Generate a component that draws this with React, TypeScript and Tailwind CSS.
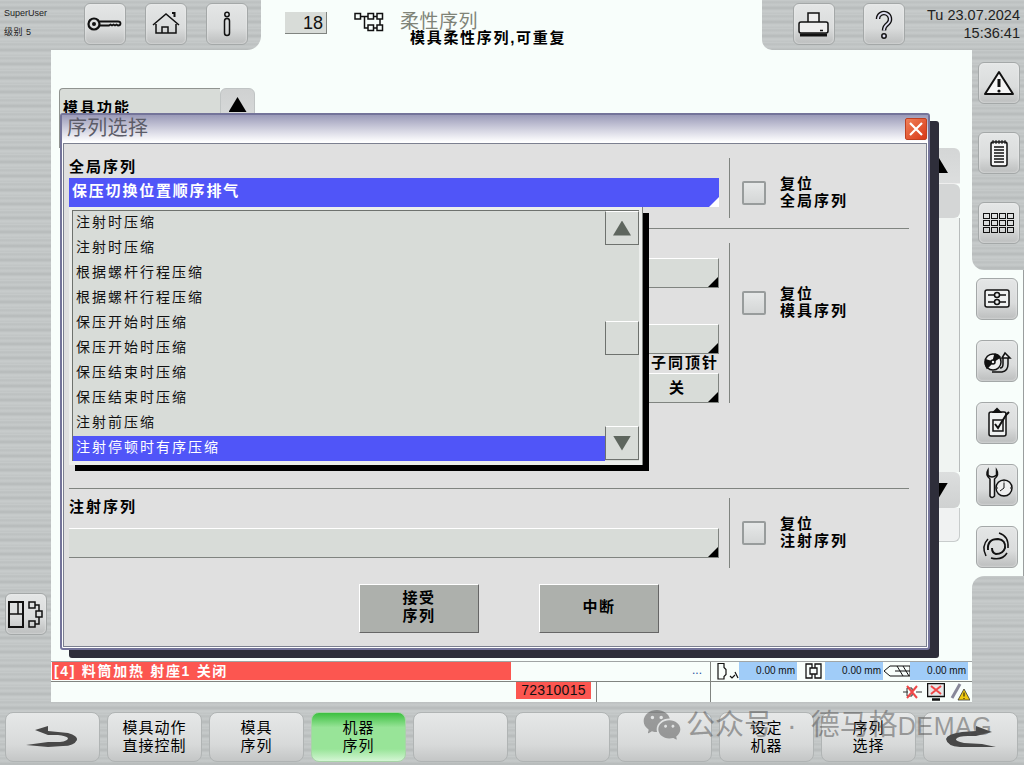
import React from 'react';
import { RiWechatFill } from 'react-icons/ri';

const metal =
  'bg-[repeating-linear-gradient(180deg,#c8cccc_0px,#bcc0c0_2px,#c6caca_5px,#b6baba_8px,#c8cccc_11px,#c0c4c4_14px)]';

const Tool = ({ children }: { children: React.ReactNode }) => (
  <button className="w-[42px] h-[42px] shrink-0 rounded-[6px] border border-[#a4a8a8] bg-[linear-gradient(#e4e6e6,#dadcdc_60%,#bcbebe)] shadow-[inset_0_0_2px_#f4f4f4] p-0">
    <svg className="block -m-px" viewBox="0 0 42 42" width="42" height="42" fill="none" stroke="#111" strokeWidth="1.5">
      {children}
    </svg>
  </button>
);

const Corner = () => (
  <span className="absolute right-0 bottom-0 w-[10px] h-[10px] bg-black [clip-path:polygon(100%_0,100%_100%,0_100%)]" />
);

const Field = ({ text }: { text?: string }) => (
  <div className="relative h-[30px] bg-[#d8dcd8] border-t border-t-white border-b border-b-[#808480] border-r border-r-[#808480] flex items-center justify-center text-[15px] font-bold tracking-[2px]">
    {text}
    <Corner />
  </div>
);

const Reset = ({ lines, top }: { lines: string[]; top: string }) => (
  <div className={`flex items-center gap-[14px] ml-[12px] ${top}`}>
    <div className="w-[24px] h-[24px] rounded-[2px] border-2 border-[#989c9c] bg-[linear-gradient(#e6e8e8,#d4d6d6)]" />
    <div className="-mt-[2px] text-[15px] leading-[17px] font-bold tracking-[2px] text-black">
      {lines.map(l => (
        <div key={l}>{l}</div>
      ))}
    </div>
  </div>
);

const VLine = ({ h }: { h: string }) => <div className={`w-px bg-[#808480] shrink-0 ml-[10px] ${h}`} />;

const Softkey = ({ lines, green, children }: { lines?: string[]; green?: boolean; children?: React.ReactNode }) => (
  <div
    className={`w-[95px] h-[50px] rounded-[8px] border flex flex-col items-center justify-center text-[15px] leading-[18.5px] tracking-[1px] text-black ${
      green
        ? 'border-[#a8d4a8] bg-[linear-gradient(#3cc040,#98e498_30%,#98e498_75%,#d4f6d4)]'
        : 'border-[#b0b4b4] bg-[linear-gradient(#e6e8e8,#d8dada_65%,#c4c6c6)]'
    }`}
  >
    {lines?.map(l => (
      <div key={l}>{l}</div>
    ))}
    {children}
  </div>
);

const Mm = () => (
  <div className="w-[58px] h-[18px] bg-[#a0ccf8] text-[10px] leading-[18px] text-right pr-[2px] text-[#111]">0.00 mm</div>
);

const options = [
  '注射时压缩',
  '注射时压缩',
  '根据螺杆行程压缩',
  '根据螺杆行程压缩',
  '保压开始时压缩',
  '保压开始时压缩',
  '保压结束时压缩',
  '保压结束时压缩',
  '注射前压缩',
  '注射停顿时有序压缩',
];

const ScrollBtn = ({ up }: { up?: boolean }) => (
  <div className="h-[34px] bg-[#d8dcd8] border-l border-r border-b border-[#6e726e] border-t border-t-white flex items-center justify-center">
    <span
      className={`w-[18px] h-[15px] bg-[#5e665e] ${
        up ? '[clip-path:polygon(50%_0,100%_100%,0_100%)]' : '[clip-path:polygon(0_0,100%_0,50%_100%)]'
      }`}
    />
  </div>
);

export default function App() {
  return (
    <div className={`relative w-[1024px] h-[765px] overflow-hidden flex flex-col text-black font-['Liberation_Sans','Noto_Sans_CJK_SC',sans-serif] ${metal}`}>
      {/* top bar */}
      <header className="flex h-[50px] bg-[#f8fefb] shrink-0">
        <div className={`w-[261px] rounded-br-[14px] flex ${metal}`}>
          <div className="w-[84px] pl-[4px] pt-[8px] text-[9px] text-[#222]">
            <div className="leading-[11px]">SuperUser</div>
            <div className="leading-[11px] mt-[8px] tracking-[0.5px]">级别 5</div>
          </div>
          <div className="flex gap-[19px] pt-[3px]">
            <Tool>
              <circle cx="10" cy="21" r="5.5" strokeWidth="2.2" />
              <circle cx="10" cy="21" r="2" fill="#111" stroke="none" />
              <path d="M15.5 18.5H34q2.5 0 2.5 2t-2.5 2l-1.5-1-1.5 1-1.5-1-1.5 1-1.5-1-1.5 1H15.5" strokeWidth="1.8" />
            </Tool>
            <Tool>
              <path d="M8 22 21 11l13 11M11 21v9h20v-9M17 30v-6h6v6" fill="none" />
              <path d="M27 10h2.5v4" strokeWidth="2" />
            </Tool>
            <Tool>
              <circle cx="21" cy="11.5" r="2.2" />
              <rect x="18.5" y="15.5" width="5" height="17" rx="2.5" />
            </Tool>
          </div>
        </div>
        <div className="flex-1 flex items-start pl-[24px]">
          <div className="mt-[12px] w-[42px] h-[22px] bg-[#d8dcd8] border-r border-b border-[#808480] text-[18px] leading-[22px] text-right pr-[3px] text-[#111]">
            18
          </div>
          <svg className="ml-[27px] mt-[12px]" viewBox="0 0 30 21" width="30" height="21" fill="none" stroke="#111" strokeWidth="1.5">
            <rect x="1" y="1.5" width="5.5" height="5.5" />
            <rect x="14" y="1.5" width="5.5" height="5.5" />
            <rect x="23" y="1.5" width="5.5" height="5.5" />
            <rect x="14" y="13" width="5.5" height="5.5" />
            <rect x="23" y="13" width="5.5" height="5.5" />
            <path d="M6.5 4.5H14M19.5 4.5H23M10.5 4.5V16H14M19.5 16H23M26 7v6" />
          </svg>
          <div className="ml-[16px] mt-[11px]">
            <div className="text-[19px] leading-[22px] tracking-[0.5px] text-[#808478]">柔性序列</div>
            <div className="ml-[10px] -mt-[4px] text-[15px] leading-[18px] font-bold tracking-[1.7px] whitespace-nowrap">模具柔性序列,可重复</div>
          </div>
        </div>
        <div className={`w-[262px] rounded-bl-[10px] flex ${metal}`}>
          <div className="flex gap-[28px] pt-[3px] pl-[31px]">
            <Tool>
              <rect x="15" y="10" width="11" height="10" fill="#eee" />
              <rect x="6" y="19" width="29" height="11" rx="2" fill="#eee" />
              <path d="M7 32h27" strokeWidth="3" />
              <path d="M27 27.5h3" />
            </Tool>
            <Tool>
              <path d="M15 16a6 6 0 1 1 10 4.5q-4 3-4 7" stroke="#111" strokeWidth="4.5" />
              <path d="M15 16a6 6 0 1 1 10 4.5q-4 3-4 7" stroke="#dde" strokeWidth="1.8" />
              <circle cx="21" cy="33" r="2.2" fill="#dde" />
            </Tool>
          </div>
          <div className="flex-1 text-right pr-[4px] pt-[6px] text-[14.5px] leading-[18px] text-[#222] whitespace-nowrap">
            <div>Tu 23.07.2024</div>
            <div>15:36:41</div>
          </div>
        </div>
      </header>

      <div className="flex h-[653px] shrink-0">
        {/* left rail */}
        <div className="w-[51px] shrink-0 pl-[5px] pt-[543px]">
          <Tool>
            <rect x="4" y="9" width="14" height="25" strokeWidth="2" />
            <path d="M4 21h14M13 9v12" />
            <rect x="24" y="9" width="6" height="6" />
            <rect x="31" y="18" width="6" height="6" />
            <rect x="24" y="28" width="6" height="6" />
            <path d="M30 12h4v6M34 24v7h-4" />
          </Tool>
        </div>

        {/* main area */}
        <div className="w-[921px] shrink-0 flex flex-col">
          <main className="h-[612px] bg-[#f8fefb] border-b border-[#a0a4a4]">
            <div className="flex mt-[38px] ml-[8px]">
              <div className="w-[161px] h-[60px] rounded-tl-[4px] bg-[#d8dcd8] border-t border-l border-[#909490] pl-[3px] pt-[8px] text-[15px] font-bold tracking-[2px]">
                模具功能
              </div>
              <div className="w-[35px] h-[60px] rounded-t-[6px] bg-[linear-gradient(#cfd1d1,#e0e2e2)] border border-[#c0c4c4] pt-[8px] flex justify-center">
                <span className="w-[18px] h-[15px] bg-black [clip-path:polygon(50%_0,100%_100%,0_100%)]" />
              </div>
            </div>
            <div className="relative -mt-[25px] ml-[869px] w-[40px] pt-[25px]">
              <div className="h-[36px] rounded-tr-[6px] bg-[linear-gradient(#d4d6d6,#dcdede)] border-b border-[#eee] flex items-center justify-end pr-[12px]">
                <span className="w-[18px] h-[15px] bg-black [clip-path:polygon(50%_0,100%_100%,0_100%)]" />
              </div>
              <div className="h-[34px] rounded-r-[6px] bg-[#d4d6d6]" />
              <div className="h-[254px] bg-[#f0f4f2] border-r border-[#b8bcbc]" />
              <div className="h-[36px] rounded-r-[6px] bg-[linear-gradient(#dcdede,#cfd1d1)] flex items-center justify-end pr-[12px]">
                <span className="w-[18px] h-[15px] bg-black [clip-path:polygon(0_0,100%_0,50%_100%)]" />
              </div>
              <div className="h-[34px] rounded-br-[6px] bg-[#f0f2f2] border-r border-b border-[#c8cccc]" />
            </div>
          </main>

          {/* status bar */}
          <div className="bg-[#f8fefb] h-[40px] flex flex-col">
            <div className="flex h-[20px] border-b border-[#808480]">
              <div className="w-[459px] ml-px h-[18px] bg-[#fc5650] text-white text-[14px] leading-[18px] font-bold tracking-[1.7px] pl-[2px]">
                [4] 料筒加热 射座1 关闭
              </div>
              <div className="w-[200px] text-right pr-[8px] text-[#2850a0] text-[12px] leading-[16px] -ml-px">...</div>
              <div className="flex-1 flex border-l border-[#808480]">
                <svg className="ml-[6px]" width="22" height="18" viewBox="0 0 22 18" fill="none" stroke="#111" strokeWidth="1.2">
                  <path d="M1 1.5h6v4l2 2v5l-2 2v2.5H1zM13 14l2 2 3-3M18 10l3 6" />
                </svg>
                <Mm />
                <svg className="ml-[8px]" width="20" height="18" viewBox="0 0 20 18" fill="none" stroke="#111" strokeWidth="1.3">
                  <path d="M1 2h6v4H5v6h2v4H1zM16 2h-6v4h2v6h-2v4h6zM7 6h5M7 12h5" />
                </svg>
                <Mm />
                <svg className="-mr-[1px]" width="28" height="18" viewBox="0 0 28 18" fill="none" stroke="#111">
                  <path d="M1 9l6-5h20v10H7zM14 4l6 10M20 4l6 10M12 9h15" />
                </svg>
                <Mm />
              </div>
            </div>
            <div className="flex flex-1">
              <div className="w-[465px] shrink-0" />
              <div className="w-[75px] h-[17px] bg-[#fc5650] text-[14px] leading-[17px] text-[#111] text-center tracking-[0.3px] shrink-0">
                72310015
              </div>
              <div className="w-[120px] ml-[5px] border-l border-[#808480]" />
              <div className="flex-1 flex items-center justify-end gap-[5px] pr-[2px] -ml-[6px] border-l border-[#808480]">
                <svg width="20" height="16" viewBox="0 0 20 16" fill="none" stroke="#333">
                  <path d="M1 8h5M5 4h5v8H5zM10 6h2M10 10h2M14 8h6" />
                  <path d="M5 2l10 12M15 2 5 14" stroke="#f04848" strokeWidth="2" />
                </svg>
                <svg width="18" height="18" viewBox="0 0 18 18" fill="none" stroke="#111">
                  <rect x="0.5" y="0.5" width="17" height="13" fill="#e8e8e8" strokeWidth="1.5" />
                  <path d="M4 3l10 8M14 3 4 11" stroke="#f04848" strokeWidth="2" />
                  <path d="M5 16.5h8" strokeWidth="2.5" />
                </svg>
                <svg width="20" height="18" viewBox="0 0 20 18" fill="none">
                  <path d="M10 1 2 15" stroke="#889" strokeWidth="3" />
                  <path d="M14 6 20 17H8z" fill="#f0c810" stroke="#333" strokeWidth="0.8" />
                  <path d="M14 9.5v4M14 15v1" stroke="#111" />
                </svg>
              </div>
            </div>
          </div>
        </div>

        {/* right rail */}
        <div className="flex-1 flex flex-col bg-[#f8fefb] border-r border-r-[#9a9e9e]">
          <div className={`h-[220px] -mr-px rounded-bl-[12px] pl-[6px] pt-[12px] flex flex-col gap-[28px] ${metal}`}>
            <Tool>
              <path d="M21 10 35 32H7z" fill="#f6f6f6" strokeWidth="2" strokeLinejoin="round" />
              <path d="M21 17v8" strokeWidth="3" />
              <circle cx="21" cy="29" r="1.6" fill="#111" stroke="none" />
            </Tool>
            <Tool>
              <rect x="13" y="10" width="16" height="24" rx="2" fill="#f6f6f6" />
              <path d="M15 8v4M18 8v4M21 8v4M24 8v4M27 8v4" strokeWidth="1" />
              <path d="M16 15h10M16 18h10M16 21h10M16 24h10M16 27h10M16 30h10" />
            </Tool>
            <Tool>
              {[5, 13, 21, 29].map(x =>
                [11, 18, 25].map(y => <rect key={`${x}-${y}`} x={x + 0.5} y={y + 0.5} width="6" height="5" strokeWidth="1" />),
              )}
            </Tool>
          </div>
          <div className="h-[306px] pl-[4px] pt-[8px] flex flex-col gap-[20px]">
            <Tool>
              <rect x="9" y="12" width="24" height="17" rx="2" fill="#f0f2f2" />
              <path d="M12 17h6M24 17h6M12 24h6M24 24h6" />
              <circle cx="21" cy="17" r="2.5" />
              <circle cx="21" cy="24" r="2.5" />
            </Tool>
            <Tool>
              <ellipse cx="17" cy="22" rx="8" ry="8" fill="#f0f0f0" strokeWidth="1.5" />
              <path d="M17 22 11 28a8 8 0 0 1-1-8zM17 22l7-5a8 8 0 0 0-5-3z" fill="#111" />
              <circle cx="17" cy="22" r="2" fill="#f0f0f0" />
              <path d="M16 32h10q6-1 6-8v-6M24 28q3 0 3-4v-6" strokeWidth="1.5" />
              <path d="M26 18l3-5 5 5z" fill="#f0f0f0" />
            </Tool>
            <Tool>
              <rect x="13" y="10" width="17" height="24" rx="2" fill="#f0f2f2" />
              <path d="M18 10l3-3 3 3z" fill="#111" strokeWidth="2" />
              <rect x="17" y="18" width="10" height="11" />
              <path d="M19 22l3 4 8-13 3-3" strokeWidth="2" />
            </Tool>
            <Tool>
              <path d="M12 6q-3 5 2 9v17q2 3 4.5 0V15q5-4 2-9v5q-2 2-4.5 2t-4-2z" fill="#eee" />
              <circle cx="28" cy="24" r="8" fill="#eee" />
              <path d="M28 18.5v5.5l-4 3M28 16.5v1M35 24h-1M28 31v1M21 24h1" strokeWidth="1" />
            </Tool>
            <Tool>
              <path d="M23 7Q33 10 32 22M31 27Q26 35 15 32M10 30Q5 20 12 13" strokeWidth="1.5" />
              <path d="M12 24Q11 13 22 13Q30 14 29 22Q27 28 20 28Q16 27 16 22" strokeWidth="2" />
            </Tool>
          </div>
          <div className={`flex-1 -mr-px rounded-tl-[12px] ${metal}`} />
        </div>
      </div>

      {/* softkeys */}
      <footer className="flex gap-[7px] pl-[5px] pt-[9px]">
        <Softkey>
          <svg width="54" height="26" viewBox="28 724 54 26">
            <path
              d="M37 730 50 726V731L70 733Q80 736 79 740Q76 746 65 746L50 747 28 745 50 742 62 742Q70 741 70 738 68 736 60 735H50V735Z"
              fill="#484848"
            />
          </svg>
        </Softkey>
        <Softkey lines={['模具动作', '直接控制']} />
        <Softkey lines={['模具', '序列']} />
        <Softkey lines={['机器', '序列']} green />
        <Softkey />
        <Softkey />
        <Softkey />
        <Softkey lines={['设定', '机器']} />
        <Softkey lines={['序列', '选择']} />
        <Softkey>
          <svg width="54" height="26" viewBox="942 724 54 26">
            <path
              d="M990 732 974 726V731L960 732Q945 734 944 739 945 746 958 747L994 747 980 744 962 743Q953 741 954 739 956 736 966 736H974Z"
              fill="#484848"
            />
          </svg>
        </Softkey>
      </footer>

      {/* dialog */}
      <div className="absolute left-[60px] top-[113px] w-[870px] h-[537px] rounded-[3px] border-2 border-[#74749a] bg-white shadow-[9px_8px_0_#2e2e3a] flex flex-col">
        <div className="h-[27px] shrink-0 flex justify-between bg-[linear-gradient(#9a9ab8,#d8d8e4_60%,#ffffff)]">
          <div className="pl-[5px] text-[20px] leading-[27px] tracking-[0.3px] text-[#5c5c68]">序列选择</div>
          <div className="w-[22px] h-[22px] mt-[3px] mr-px rounded-[2px] bg-[linear-gradient(135deg,#f08058,#d83818)] border border-[#c04020] flex items-center justify-center">
            <svg width="16" height="16" viewBox="0 0 16 16" stroke="#fff" strokeWidth="2.2">
              <path d="M2 2l12 12M14 2 2 14" />
            </svg>
          </div>
        </div>
        <div className="relative flex-1 m-[1px] mb-[1px] border border-[#7c8090] bg-[#e0e0e0] pl-[5px] pt-[14px]">
          <div className="flex h-[60px]">
            <div className="w-[650px]">
              <div className="h-[20px] text-[15px] leading-[17px] font-bold tracking-[2px]">全局序列</div>
              <div className="relative h-[29px] bg-[#5055f8] text-white text-[15px] leading-[26px] font-bold tracking-[1.8px] pl-[3px]">
                保压切换位置顺序排气
                <span className="absolute right-0 bottom-0 w-[10px] h-[10px] bg-white [clip-path:polygon(100%_0,100%_100%,0_100%)]" />
              </div>
            </div>
            <VLine h="h-[60px]" />
            <Reset lines={['复位', '全局序列']} top="mt-[22px] h-[26px] self-start" />
          </div>
          <div className="h-px w-[840px] bg-[#808480] mt-[10px]" />
          <div className="flex h-[160px] mt-[14px]">
            <div className="w-[650px] pt-[15px] flex flex-col items-end">
              <div className="w-[82px]"><Field /></div>
              <div className="w-[82px] mt-[36px]"><Field /></div>
              <div className="h-[20px] text-[15px] leading-[18px] font-bold tracking-[2px] whitespace-nowrap">子同顶针</div>
              <div className="w-[82px]"><Field text="关" /></div>
            </div>
            <VLine h="h-[160px]" />
            <Reset lines={['复位', '模具序列']} top="mt-[47px] h-[26px] self-start" />
          </div>
          <div className="h-px w-[840px] bg-[#808480] mt-[85px]" />
          <div className="flex h-[70px] mt-[9px]">
            <div className="w-[650px]">
              <div className="h-[30px] text-[15px] leading-[17px] font-bold tracking-[2px]">注射序列</div>
              <Field />
            </div>
            <VLine h="h-[70px]" />
            <Reset lines={['复位', '注射序列']} top="mt-[22px] h-[26px] self-start" />
          </div>
          <div className="flex gap-[60px] ml-[290px] mt-[16px]">
            <button className="w-[120px] h-[49px] pb-[3px] bg-[#adb0ac] border-t border-l border-t-white border-l-white border-r border-b border-r-[#666] border-b-[#666] text-[15px] leading-[18px] font-bold tracking-[1.5px]">
              接受<br />序列
            </button>
            <button className="w-[120px] h-[49px] pb-[3px] bg-[#adb0ac] border-t border-l border-t-white border-l-white border-r border-b border-r-[#666] border-b-[#666] text-[15px] leading-[18px] font-bold tracking-[1.5px]">
              中断
            </button>
          </div>

          {/* open dropdown */}
          <div className="absolute left-[5px] top-[63px] w-[574px] h-[258px] bg-[#eceeec] shadow-[6px_6px_0_#000] pt-[3px] pl-[3px] pr-[3px] pb-[4px] border-r border-r-[#808480]">
            <div className="flex h-full border-t border-l border-[#6e726e]">
              <div className="w-[532px] shrink-0 bg-[#d8dcd8]">
                {options.map((o, i) => (
                  <div
                    key={i}
                    className={`h-[25px] pl-[3px] text-[14px] leading-[23px] tracking-[2px] ${
                      i === 9 ? 'bg-[#5055f8] text-white' : 'text-[#111]'
                    }`}
                  >
                    {o}
                  </div>
                ))}
              </div>
              <div className="flex-1 bg-[#d8dcd8] flex flex-col">
                <ScrollBtn up />
                <div className="h-[76px]" />
                <div className="h-[34px] border-l border-r border-b border-[#6e726e] border-t border-t-white" />
                <div className="h-[71px]" />
                <ScrollBtn />
              </div>
            </div>
          </div>
        </div>
      </div>

      {/* watermark */}
      <div className="absolute left-[642px] top-[705px] flex items-center text-[29px] leading-[36px] text-[#505050]/50 pointer-events-none whitespace-nowrap">
        <RiWechatFill size={40} className="mr-[4px]" />
        <span>公众号<span className="mx-[14px]">·</span>德马格<span className="text-[25px] tracking-[0.6px]">DEMAG</span></span>
      </div>
    </div>
  );
}
